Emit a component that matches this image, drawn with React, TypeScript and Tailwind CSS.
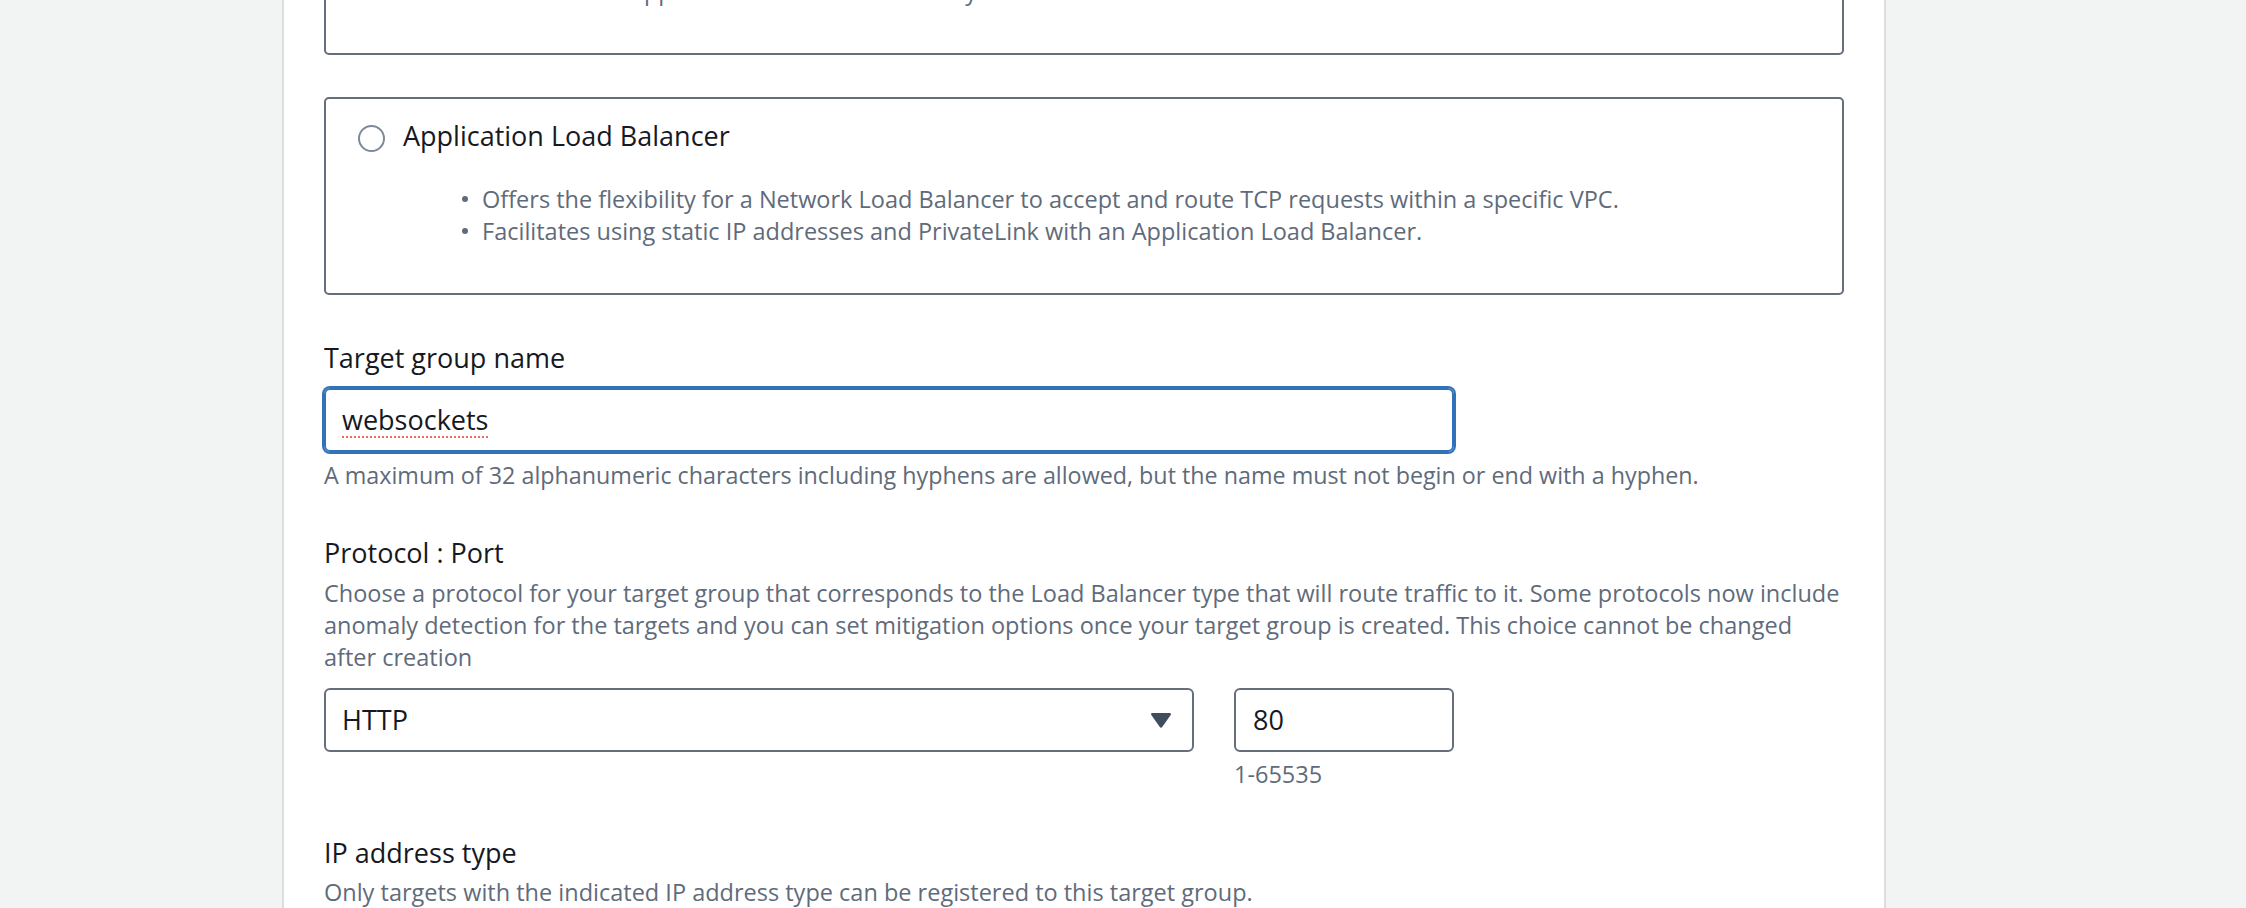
function Tile({ title, points }: { title: string; points: string[] }) {
  return (
    <div className="rounded-[5px] border-2 border-[#656e7b] bg-white px-[32px] pb-[46px] pt-[19px]">
      <div className="flex items-start gap-[18px]">
        <span className="mt-[7px] h-[27px] w-[27px] shrink-0 rounded-full border-2 border-[#7d8998] bg-white" />
        <span className="text-[27px] leading-[36px] text-[#16191f]">{title}</span>
      </div>
      <ul className="mt-[29px] pl-[104px]">
        {points.map((p) => (
          <li
            key={p}
            className="flex items-center gap-[14px] whitespace-nowrap text-[23.5px] leading-[32px] text-[#5f6b7a]"
          >
            <span className="h-[6px] w-[6px] shrink-0 rounded-full bg-[#5f6b7a]" />
            {p}
          </li>
        ))}
      </ul>
    </div>
  );
}

export default function App() {
  return (
    <div className="h-[908px] overflow-hidden bg-[#f2f3f3] font-['Open_Sans',sans-serif]">
      <div className="ml-[282px] flex h-full w-[1604px] flex-col border-x-2 border-[#dadede] bg-white px-[40px]">
        <div className="-mt-[143px] flex flex-col">
          <Tile
            title="Lambda function"
            points={[
              "Facilitates routing to a single Lambda function.",
              "Accessible to Application Load Balancers only.",
            ]}
          />
          <div className="mt-[42px]">
            <Tile
              title="Application Load Balancer"
              points={[
                "Offers the flexibility for a Network Load Balancer to accept and route TCP requests within a specific VPC.",
                "Facilitates using static IP addresses and PrivateLink with an Application Load Balancer.",
              ]}
            />
          </div>

          <p className="mt-[45px] text-[27px] leading-[36px] text-[#16191f]">Target group name</p>
          <div className="mt-[12px] flex h-[64px] w-[1130px] items-center rounded-[6px] border-2 border-[#3272b8] px-[16px] shadow-[0_0_0_2px_#3272b8]">
            <span className="text-[27px] leading-[36px] text-[#16191f] underline decoration-[#ee6a5f] decoration-dotted decoration-2 underline-offset-[6px]">
              websockets
            </span>
          </div>
          <p className="mt-[7px] whitespace-nowrap text-[23.3px] leading-[32px] text-[#5f6b7a]">
            A maximum of 32 alphanumeric characters including hyphens are allowed, but the name must not begin or end
            with a hyphen.
          </p>

          <p className="mt-[44px] text-[27px] leading-[36px] text-[#16191f]">Protocol : Port</p>
          <p className="mt-[6px] whitespace-nowrap text-[23.5px] leading-[32px] text-[#5f6b7a]">
            Choose a protocol for your target group that corresponds to the Load Balancer type that will route traffic
            to it. Some protocols now include
            <br />
            anomaly detection for the targets and you can set mitigation options once your target group is created.
            This choice cannot be changed
            <br />
            after creation
          </p>

          <div className="mt-[15px] flex w-[1130px] gap-[40px]">
            <div className="flex h-[64px] w-[870px] items-center justify-between rounded-[6px] border-2 border-[#656e7b] pl-[16px] pr-[21px]">
              <span className="text-[27px] leading-[36px] text-[#16191f]">HTTP</span>
              <svg width="20" height="15" viewBox="0 0 20 15">
                <path d="M1.5 0h17c1.2 0 1.8 1 1.2 2L11.2 14c-.6.9-1.8.9-2.4 0L.3 2C-.3 1 .3 0 1.5 0z" fill="#414d5c" />
              </svg>
            </div>
            <div className="flex flex-col">
              <div className="flex h-[64px] w-[220px] items-center rounded-[6px] border-2 border-[#656e7b] px-[17px]">
                <span className="text-[27px] leading-[36px] text-[#16191f]">80</span>
              </div>
              <p className="mt-[6px] text-[23.5px] leading-[32px] text-[#5f6b7a]">1-65535</p>
            </div>
          </div>

          <p className="mt-[45px] text-[27px] leading-[36px] text-[#16191f]">IP address type</p>
          <p className="mt-[5px] whitespace-nowrap text-[23.5px] leading-[32px] text-[#5f6b7a]">
            Only targets with the indicated IP address type can be registered to this target group.
          </p>
        </div>
      </div>
    </div>
  );
}
